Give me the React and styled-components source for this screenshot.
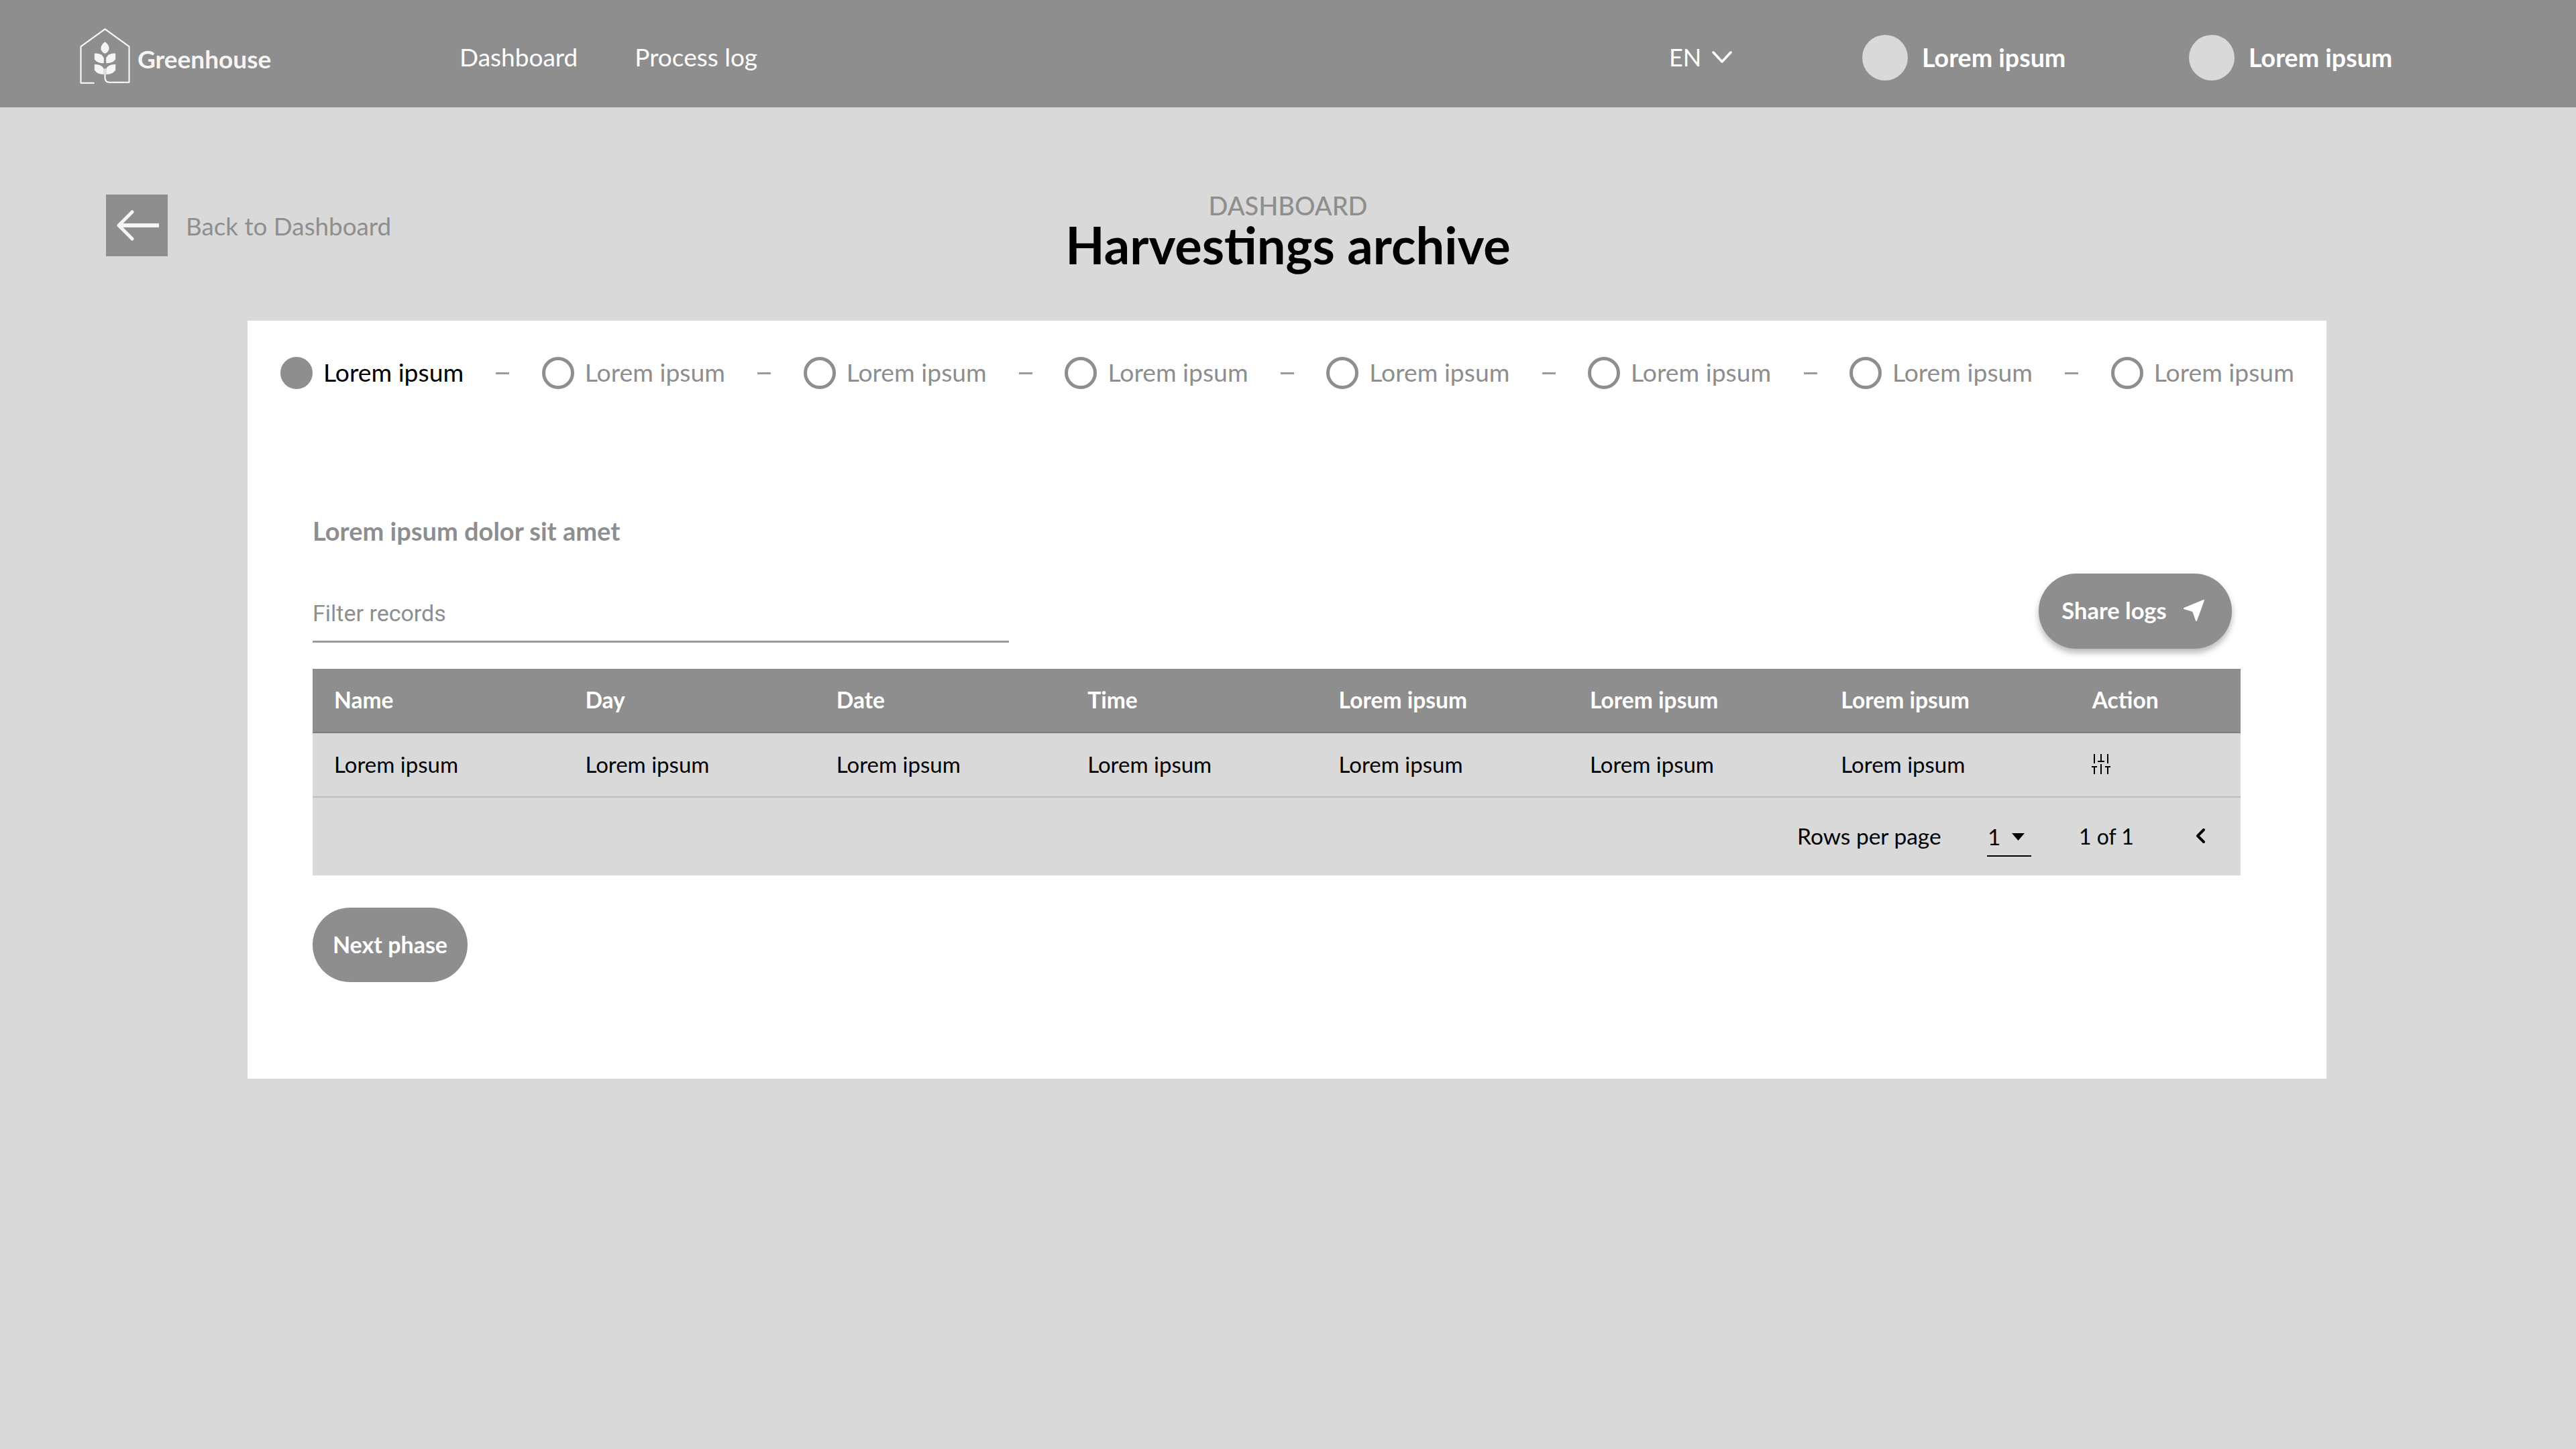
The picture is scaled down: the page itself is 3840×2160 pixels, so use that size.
import React from "react";
import styled, { createGlobalStyle } from "styled-components";

const Global = createGlobalStyle`
  html, body { margin: 0; padding: 0; background: #d9d9d9; }
  body { font-family: "Lato", "Noto Sans", sans-serif; color: #000; }
  * { box-sizing: border-box; }
`;

const Page = styled.div`
  width: 3840px;
  height: 2160px;
  background: #d9d9d9;
  overflow: hidden;
`;
const TopBar = styled.header`
  height: 160px;
  background: #8e8e8e;
  display: flex;
  align-items: center;
  color: #fff;
  padding: 11px 0 0 118px;
`;
const Brand = styled.div`
  width: 567px;
  display: flex;
  align-items: center;
  gap: 10px;
  svg { display: block; margin-top: -5px; }
`;
const BrandName = styled.span`
  font-size: 37px;
  font-weight: 700;
  color: #f5f5f5;
  margin-top: 4px;
`;
const Nav = styled.nav`
  display: flex;
  gap: 85px;
  width: 1803px;
`;
const NavLink = styled.a`
  font-size: 37px;
  font-weight: 400;
  margin-top: -3px;
`;
const Lang = styled.div`
  display: flex;
  align-items: center;
  gap: 16px;
  width: 288px;
  font-size: 36px;
  font-weight: 400;
  margin-top: -1px;
`;
const User = styled.div`
  display: flex;
  align-items: center;
  gap: 21px;
  width: 487px;
  font-size: 37.6px;
  font-weight: 700;
`;
const Avatar = styled.span`
  width: 68px;
  height: 68px;
  border-radius: 50%;
  background: #d9d9d9;
`;
const TitleRow = styled.div`
  height: 318px;
  padding: 130px 158px 0;
  display: grid;
  grid-template-columns: 1fr auto 1fr;
`;
const Back = styled.a`
  display: flex;
  align-items: flex-start;
  gap: 27px;
  font-size: 36.8px;
  color: #8e8e8e;
`;
const BackText = styled.span`
  margin-top: 25px;
`;
const BackBox = styled.span`
  width: 92px;
  height: 92px;
  background: #8e8e8e;
  display: flex;
  align-items: center;
  justify-content: center;
  padding-left: 4px;
`;
const Heading = styled.div`
  text-align: center;
  margin-top: -2px;
`;
const Eyebrow = styled.div`
  font-size: 38px;
  line-height: 36px;
  font-weight: 500;
  color: #8e8e8e;
`;
const H1 = styled.h1`
  margin: 0;
  font-size: 75.8px;
  line-height: 82px;
  font-weight: 700;
  color: #000;
`;
const Card = styled.main`
  margin-left: 369px;
  width: 3099px;
  height: 1130px;
  background: #fff;
  padding: 54px 48px 0 49px;
`;
const Stepper = styled.ol`
  list-style: none;
  margin: 0;
  padding: 0;
  display: flex;
  align-items: center;
  justify-content: space-between;
`;
const Step = styled.li`
  display: flex;
  align-items: center;
  gap: 16px;
  font-size: 37.3px;
  color: ${p => (p.$active ? "#000" : "#8e8e8e")};
`;
const StepLabel = styled.span`
  margin-top: -3px;
`;
const Dot = styled.span`
  width: 48px;
  height: 48px;
  border-radius: 50%;
  border: 5px solid #8e8e8e;
  background: ${p => (p.$active ? "#8e8e8e" : "#fff")};
`;
const Dash = styled.span`
  width: 20px;
  height: 3px;
  background: #9a9a9a;
`;
const Body = styled.section`
  padding: 0 79px 0 48px;
`;
const SectionTitle = styled.h2`
  margin: 189px 0 0;
  font-size: 38px;
  line-height: 44px;
  font-weight: 700;
  color: #8e8e8e;
`;
const Controls = styled.div`
  display: flex;
  justify-content: space-between;
  align-items: flex-start;
  height: 142px;
  margin-top: 42px;
  padding-right: 14px;
`;
const Filter = styled.div`
  width: 1038px;
  height: 103px;
  border-bottom: 3px solid #9a9a9a;
  font-family: "Roboto", sans-serif;
  font-size: 34px;
  color: #8e8e8e;
  padding-top: 37px;
  line-height: 44px;
`;
const Share = styled.button`
  width: 288px;
  height: 112px;
  border: 0;
  border-radius: 56px;
  background: #8e8e8e;
  color: #fff;
  font: 700 34.5px "Lato", sans-serif;
  display: flex;
  align-items: center;
  justify-content: center;
  gap: 24px;
  box-shadow: 0 6px 10px rgba(0, 0, 0, 0.28);
  padding: 0 7px 3px 0;
`;
const Table = styled.div`
  width: 2874px;
  background: #d9d9d9;
`;
const Row = styled.div`
  display: grid;
  grid-template-columns: repeat(7, 374.4px) 1fr;
  align-items: center;
  padding: 0 0 3px 32px;
  height: 96px;
  font-size: ${p => (p.$head ? "33.6px" : "33px")};
  border-bottom: 2px solid ${p => (p.$head ? "#7e7e7e" : "#bdbdbd")};
  background: ${p => (p.$head ? "#8e8e8e" : "transparent")};
  color: ${p => (p.$head ? "#fff" : "#000")};
  font-weight: ${p => (p.$head ? 700 : 400)};
`;
const ActionIcon = styled.span`
  display: block;
  margin-left: -2px;
  svg { display: block; }
`;
const Pager = styled.div`
  height: 116px;
  display: flex;
  align-items: center;
  font-size: 33.5px;
  padding: 0 0 2px 2213px;
`;
const PerPage = styled.div`
  width: 283px;
`;
const Select = styled.div`
  width: 66px;
  height: 46px;
  margin-top: 16px;
  margin-right: 71px;
  border-bottom: 2px solid #000;
  display: flex;
  align-items: flex-start;
  justify-content: space-between;
  padding: 0 10px 0 1px;
  line-height: 32px;
  svg { margin-top: 11px; }
`;
const PageInfo = styled.div`
  width: 174px;
  font-size: 32px;
`;
const Next = styled.button`
  display: block;
  width: 231px;
  height: 111px;
  margin-top: 48px;
  border: 0;
  border-radius: 56px;
  background: #8e8e8e;
  color: #fff;
  font: 700 34px "Lato", sans-serif;
  padding: 0 0 2px;
`;

const Logo = () => (
  <svg width="77" height="85" viewBox="50 40 230 255" fill="none">
    <path d="M115 288H57V125L165 47L273 125V285H185Q165 285 165 265V225" stroke="#fff" strokeWidth="6" strokeLinecap="round" strokeLinejoin="round" />
    <g fill="#f5f5f5">
      <path d="M165 104Q186 120 183 138Q178 152 165 156Q152 152 147 138Q144 120 165 104Z" />
      <path d="M118 156Q150 154 160 176V200Q128 200 118 182Z" />
      <path d="M212 156Q180 154 170 176V200Q202 200 212 182Z" />
      <path d="M118 205Q150 203 160 225V250Q128 250 118 230Z" />
      <path d="M212 205Q180 203 170 225V250Q202 250 212 230Z" />
    </g>
  </svg>
);

const ArrowBack = () => (
  <svg width="64" height="46" viewBox="0 0 64 46" fill="none" stroke="#f5f5f5" strokeLinecap="round" strokeLinejoin="round">
    <path d="M23 3L3 23L23 43" strokeWidth="5" />
    <path d="M4 23H63" strokeWidth="6" strokeLinecap="butt" />
  </svg>
);

const ChevronDown = () => (
  <svg width="30" height="18" viewBox="0 0 30 18" fill="none" stroke="#fff" strokeWidth="3.5" strokeLinecap="round" strokeLinejoin="round">
    <path d="M2 2L15 16L28 2" />
  </svg>
);

const SendIcon = () => (
  <svg width="32" height="32" viewBox="0 0 32 32" fill="#fff" stroke="#fff" strokeWidth="2" strokeLinejoin="round">
    <path d="M31 1L2 13L15 17L20 31Z" />
  </svg>
);

const SlidersIcon = () => (
  <svg width="30" height="30" viewBox="0 0 30 30" fill="none" stroke="#000" strokeWidth="2">
    <path d="M5 0V14M15 0V10M10 11H20M25 0V14" />
    <path d="M1 19H9M5 19V30M15 15V30M21 19H29M25 19V30" />
  </svg>
);

const Caret = () => (
  <svg width="19" height="11" viewBox="0 0 19 11" fill="#000">
    <path d="M0 0H19L9.5 11Z" />
  </svg>
);

const ChevronLeft = () => (
  <svg width="14" height="22" viewBox="0 0 14 22" fill="none" stroke="#000" strokeWidth="4" strokeLinecap="round" strokeLinejoin="round">
    <path d="M12 2L3 11L12 20" />
  </svg>
);

const heads = ["Name", "Day", "Date", "Time", "Lorem ipsum", "Lorem ipsum", "Lorem ipsum", "Action"];

export default function App() {
  return (
    <Page>
      <Global />
      <TopBar>
        <Brand>
          <Logo />
          <BrandName>Greenhouse</BrandName>
        </Brand>
        <Nav>
          <NavLink>Dashboard</NavLink>
          <NavLink>Process log</NavLink>
        </Nav>
        <Lang>
          EN <ChevronDown />
        </Lang>
        <User>
          <Avatar />
          Lorem ipsum
        </User>
        <User>
          <Avatar />
          Lorem ipsum
        </User>
      </TopBar>
      <TitleRow>
        <Back>
          <BackBox>
            <ArrowBack />
          </BackBox>
          <BackText>Back to Dashboard</BackText>
        </Back>
        <Heading>
          <Eyebrow>DASHBOARD</Eyebrow>
          <H1>Harvestings archive</H1>
        </Heading>
        <div />
      </TitleRow>
      <Card>
        <Stepper>
          {Array.from({ length: 8 }).map((_, i) => (
            <React.Fragment key={i}>
              {i > 0 && <Dash />}
              <Step $active={i === 0}>
                <Dot $active={i === 0} />
                <StepLabel>Lorem ipsum</StepLabel>
              </Step>
            </React.Fragment>
          ))}
        </Stepper>
        <Body>
          <SectionTitle>Lorem ipsum dolor sit amet</SectionTitle>
          <Controls>
            <Filter>Filter records</Filter>
            <Share>
              Share logs <SendIcon />
            </Share>
          </Controls>
          <Table>
            <Row $head>
              {heads.map((h, i) => (
                <span key={i}>{h}</span>
              ))}
            </Row>
            <Row>
              {Array.from({ length: 7 }).map((_, i) => (
                <span key={i}>Lorem ipsum</span>
              ))}
              <ActionIcon>
                <SlidersIcon />
              </ActionIcon>
            </Row>
            <Pager>
              <PerPage>Rows per page</PerPage>
              <Select>
                1 <Caret />
              </Select>
              <PageInfo>1 of 1</PageInfo>
              <ChevronLeft />
            </Pager>
          </Table>
          <Next>Next phase</Next>
        </Body>
      </Card>
    </Page>
  );
}
